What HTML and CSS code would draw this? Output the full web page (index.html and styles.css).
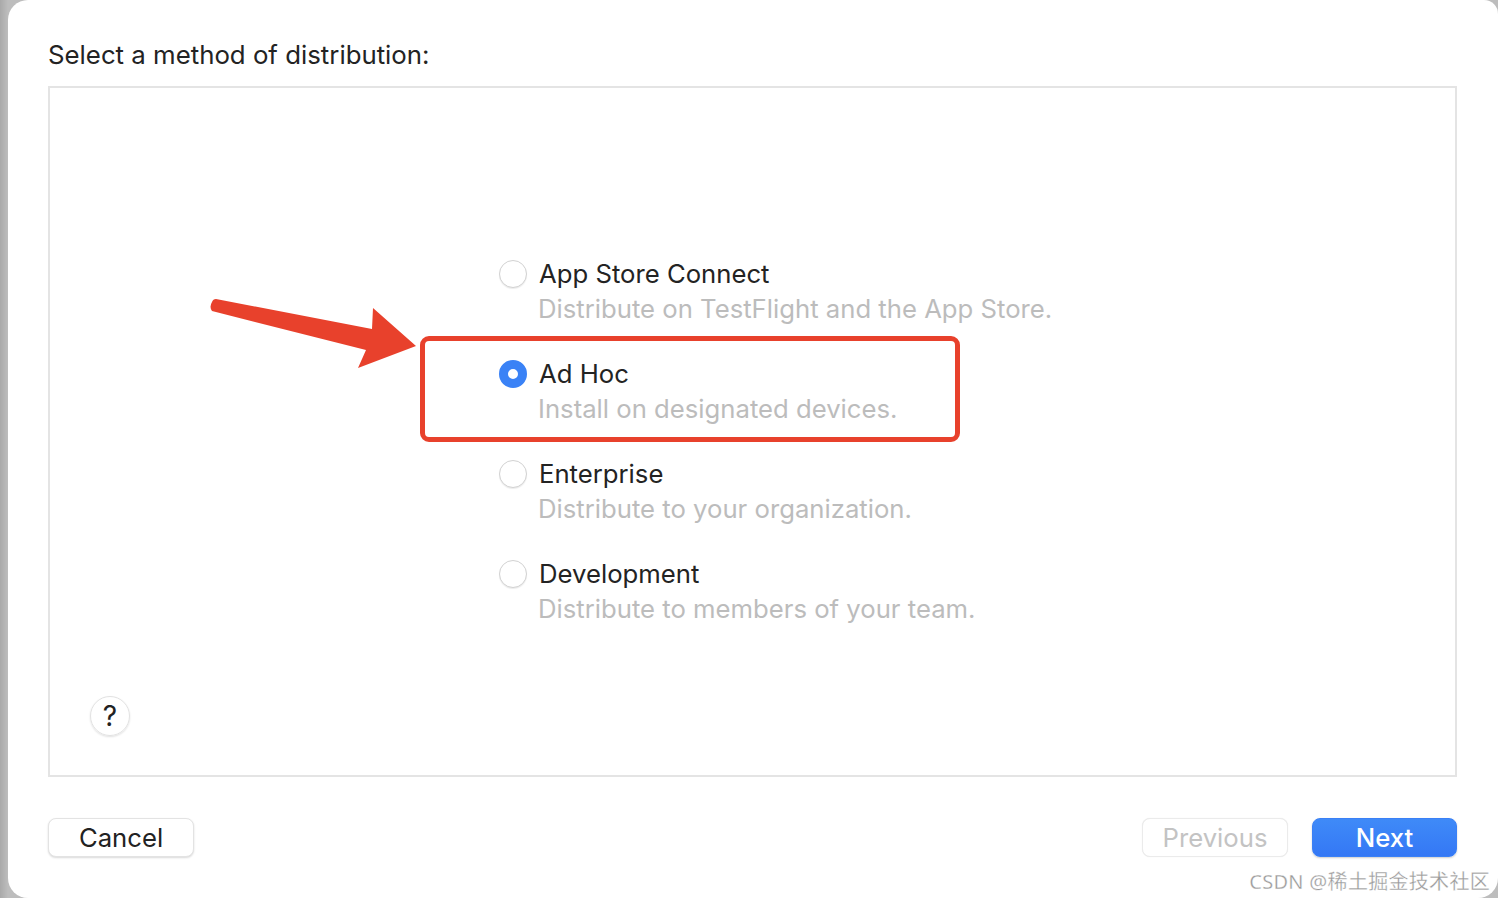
FILE: index.html
```html
<!DOCTYPE html>
<html lang="en">
<head>
<meta charset="utf-8">
<title>Select a method of distribution</title>
<link rel="stylesheet" href="styles.css">
</head>
<body>
<div class="window">
  <h1 class="title">Select a method of distribution:</h1>
  <div class="panel">
    <div class="options">
      <div class="option">
        <div class="row"><span class="radio"></span><span class="opt-title">App Store Connect</span></div>
        <div class="opt-sub">Distribute on TestFlight and the App Store.</div>
      </div>
      <div class="option">
        <div class="row"><span class="radio checked"></span><span class="opt-title">Ad Hoc</span></div>
        <div class="opt-sub">Install on designated devices.</div>
      </div>
      <div class="option">
        <div class="row"><span class="radio"></span><span class="opt-title">Enterprise</span></div>
        <div class="opt-sub">Distribute to your organization.</div>
      </div>
      <div class="option">
        <div class="row"><span class="radio"></span><span class="opt-title">Development</span></div>
        <div class="opt-sub">Distribute to members of your team.</div>
      </div>
    </div>
    <div class="help">?</div>
    <div class="highlight"></div>
    <svg class="arrow" width="220" height="80" viewBox="0 0 220 80">
      <path d="M4 4 Q1 9 4 13 L158 52 L150 70 L208 48 L165 10 L164 31 L8 1 Q5 1 4 4 Z" fill="#e8412c"/>
    </svg>
  </div>
  <div class="footer">
    <button class="btn">Cancel</button>
    <div class="spacer"></div>
    <button class="btn disabled">Previous</button>
    <button class="btn primary">Next</button>
  </div>
  <div class="watermark">CSDN @稀土掘金技术社区</div>
</div>
</body>
</html>
```

FILE: styles.css
```css
html, body {
  margin: 0;
  padding: 0;
}
body {
  width: 1498px;
  height: 898px;
  overflow: hidden;
  background: linear-gradient(90deg, #a9a9a9, #bdbdbd 8px);
  font-family: Inter, "Noto Sans", "Liberation Sans", sans-serif;
  color: #232323;
}
.window {
  position: relative;
  margin-left: 8px;
  width: 1490px;
  height: 898px;
  box-sizing: border-box;
  background: #fff;
  border-radius: 20px 14px 20px 20px;
  padding: 40px 0 0 40px;
}
.title {
  margin: 0;
  font-size: 25.8px;
  font-weight: 400;
  line-height: 30px;
  color: #232323;
}
.panel {
  position: relative;
  margin-top: 16px;
  width: 1409px;
  height: 691px;
  box-sizing: border-box;
  border: 2px solid #e4e4e4;
  display: flex;
  flex-direction: column;
}
.options {
  margin-top: 169px;
  padding-left: 449px;
  display: flex;
  flex-direction: column;
}
.option {
  height: 100px;
}
.row {
  display: flex;
  align-items: center;
  height: 34px;
}
.radio {
  width: 28px;
  height: 28px;
  box-sizing: border-box;
  border-radius: 50%;
  border: 1px solid #d2d2d2;
  background: #fff;
  box-shadow: 0 1px 1px rgba(0,0,0,0.08);
  margin-right: 12px;
  flex: none;
}
.radio.checked {
  border: 9px solid #3a82f6;
  background: #fff;
  box-shadow: none;
}
.opt-title {
  font-size: 25.7px;
  line-height: 34px;
  color: #232323;
}
.opt-sub {
  padding-left: 39px;
  font-size: 25.7px;
  line-height: 34px;
  color: #bcbcbc;
  margin-top: 1px;
}
.help {
  margin-top: 39px;
  margin-left: 40px;
  width: 40px;
  height: 40px;
  box-sizing: border-box;
  border-radius: 50%;
  border: 1px solid #e2e2e2;
  box-shadow: 0 1px 2px rgba(0,0,0,0.12);
  display: flex;
  align-items: center;
  justify-content: center;
  font-size: 28px;
  font-weight: 400;
  color: #222;
}
.highlight {
  position: absolute;
  left: 370px;
  top: 248px;
  width: 540px;
  height: 106px;
  box-sizing: border-box;
  border: 5px solid #e8412c;
  border-radius: 9px;
}
.arrow {
  position: absolute;
  left: 158px;
  top: 210px;
}
.footer {
  display: flex;
  align-items: center;
  margin-top: 41px;
  width: 1409px;
  gap: 24px;
}
.spacer {
  flex: 1;
}
.btn {
  width: 146px;
  height: 39px;
  border-radius: 8px;
  border: 1px solid #e3e3e3;
  background: #fff;
  box-shadow: 0 1px 2px rgba(0,0,0,0.15);
  font-family: Inter, "Noto Sans", "Liberation Sans", sans-serif;
  font-size: 25.7px;
  color: #222;
  padding: 0;
}
.btn.disabled {
  color: #c3c3c3;
  box-shadow: 0 0 1px rgba(0,0,0,0.1);
  border-color: #ebebeb;
}
.btn.primary {
  width: 145px;
  background: linear-gradient(180deg, #3f8af8, #3478f5);
  border-color: #3a80f6;
  color: #fff;
  font-weight: 500;
  box-shadow: 0 1px 2px rgba(0,0,0,0.2);
}
.watermark {
  position: absolute;
  right: 8px;
  bottom: 3px;
  font-family: "Noto Sans", "Noto Sans CJK SC", sans-serif;
  font-size: 20px;
  color: #999;
  letter-spacing: 0.3px;
  -webkit-text-stroke: 0.3px #fff;
}
```
